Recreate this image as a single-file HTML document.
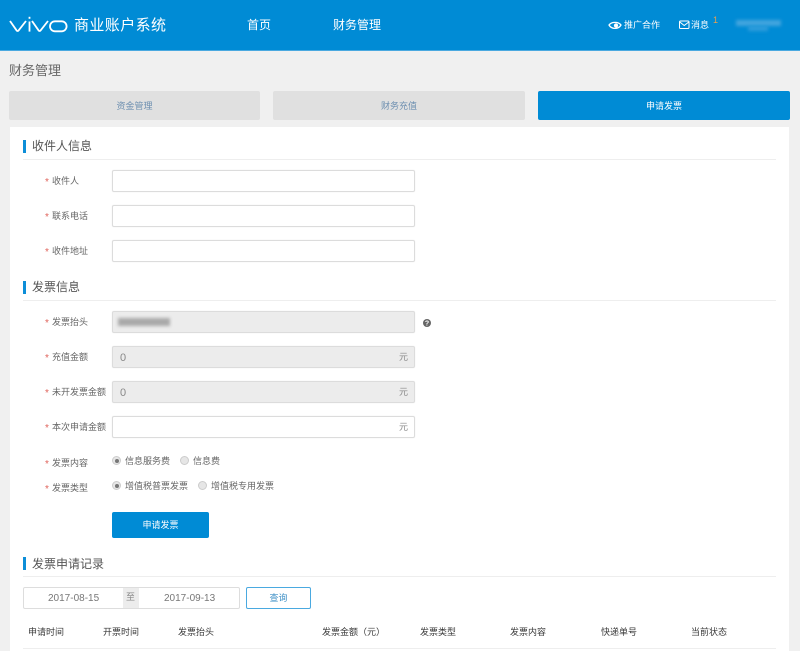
<!DOCTYPE html>
<html lang="zh"><head><meta charset="utf-8"><title>财务管理</title>
<style>
html,body{margin:0;padding:0;width:800px;height:651px;overflow:hidden;background:#f0f0f0}
body{position:relative;font-family:"Liberation Sans","Noto Sans CJK SC",sans-serif;color:#666}
.a,.t,.i,.tab,.sec,.line,.star,.r{position:absolute}
.t{white-space:nowrap;line-height:14px;font-size:9px;filter:blur(.35px)}
#hd{position:absolute;left:0;top:0;width:800px;height:50px;background:#008bd5;border-bottom:1px solid #4aa9e0}
.tab{top:91px;height:29px;width:251px;background:#e0e0e0;border-radius:2px;text-align:center;line-height:30px;font-size:9px;color:#6d8fb0}
.tab span{filter:blur(.35px);display:inline-block}
#card{position:absolute;left:10px;top:127px;width:779px;height:524px;background:#fff}
.bar{position:absolute;left:23px;width:3px;height:13px;background:#0d8ed8}
.sec{left:32px;font-size:12px;line-height:16px;color:#555;white-space:nowrap;filter:blur(.3px)}
.line{left:23px;width:753px;height:1px;background:#eee}
.i{left:112px;width:301px;height:20px;border:1px solid #dcdcdc;border-radius:2px;background:#fff;box-shadow:0 0 1px #e4e4e4}
.i.d{background:#ececec}
.star{left:45px;color:#e0645c;font-size:10px;line-height:15px;filter:blur(.3px)}
.r{width:7px;height:7px;border-radius:50%;background:#e6e6e6;border:1px solid #ccc}
.r.on::after{content:"";position:absolute;left:1.5px;top:1.5px;width:4px;height:4px;border-radius:50%;background:#777}
.u{position:absolute;left:399px;font-size:9px;line-height:14px;color:#888;filter:blur(.3px)}
.l{left:52px}
.th{top:625px;color:#3a3a3a;font-size:9px}
</style></head><body>
<div id="hd"></div>
<svg class="a" style="left:9px;top:15px;filter:blur(.2px)" width="60" height="18" viewBox="0 0 60 18" fill="none" stroke="#fff" stroke-width="1.8">
<path d="M1 6 L7.6 15.4 Q8.6 16.6 9.6 15.4 L17 6"/><path d="M20.5 6.5V16.6"/><path d="M20.5 1.8V3.8"/><path d="M23 6 L29.6 15.4 Q30.6 16.6 31.6 15.4 L39 6"/><rect x="41" y="6.3" width="16.6" height="10" rx="5"/>
</svg>
<div class="t" style="left:74px;top:17px;font-size:15px;letter-spacing:.4px;line-height:18px;color:#fff">商业账户系统</div>
<div class="t" style="left:247px;top:18px;font-size:12px;color:#fff">首页</div>
<div class="t" style="left:333px;top:18px;font-size:12px;color:#fff">财务管理</div>
<svg class="a" style="left:608px;top:20px" width="14" height="11" viewBox="0 0 14 11" fill="none" stroke="#fff" stroke-width="1.3">
<path d="M1 5 C3.5 1.5 10.5 1.5 13 5 C10.5 9.5 3.5 9.5 1 5Z"/><circle cx="8" cy="5.5" r="1.5" fill="#fff"/>
</svg>
<div class="t" style="left:624px;top:18px;color:#fff">推广合作</div>
<svg class="a" style="left:679px;top:20px" width="11" height="10" viewBox="0 0 11 10" fill="none" stroke="#fff" stroke-width="1">
<rect x=".5" y="1" width="9.5" height="7.5" rx="1"/><path d="M.8 2 L5.2 5.5 L9.8 2"/>
</svg>
<div class="t" style="left:691px;top:18px;color:#fff">消息</div>
<div class="t" style="left:713px;top:13px;color:#e8a050;font-size:9px">1</div>
<div class="a" style="left:736px;top:20px;width:45px;height:6px;background:#42a5de;filter:blur(1.5px)"></div>
<div class="a" style="left:748px;top:26px;width:20px;height:5px;background:#2e9cdb;filter:blur(1.5px)"></div>

<div class="t" style="left:9px;top:64px;font-size:13px;color:#666">财务管理</div>
<div class="tab" style="left:9px"><span>资金管理</span></div>
<div class="tab" style="left:273px;width:252px"><span>财务充值</span></div>
<div class="tab" style="left:538px;width:252px;background:#008bd5;color:#fff"><span>申请发票</span></div>
<div id="card"></div>

<div class="bar" style="top:140px"></div><div class="sec" style="top:138px">收件人信息</div><div class="line" style="top:159px"></div>
<div class="star" style="top:175px">*</div><div class="t l" style="top:174px">收件人</div><div class="i" style="top:170px"></div>
<div class="star" style="top:210px">*</div><div class="t l" style="top:209px">联系电话</div><div class="i" style="top:205px"></div>
<div class="star" style="top:245px">*</div><div class="t l" style="top:244px">收件地址</div><div class="i" style="top:240px"></div>

<div class="bar" style="top:281px"></div><div class="sec" style="top:279px">发票信息</div><div class="line" style="top:300px"></div>
<div class="star" style="top:316px">*</div><div class="t l" style="top:315px">发票抬头</div><div class="i d" style="top:311px"></div>
<div class="a" style="left:118px;top:318px;width:52px;height:8px;background:#aaa;filter:blur(1.5px)"></div>
<svg class="a" style="left:423px;top:319px" width="8" height="8" viewBox="0 0 8 8"><circle cx="4" cy="4" r="4" fill="#666"/><text x="4" y="6.6" font-size="7" font-weight="bold" text-anchor="middle" fill="#fff" font-family="Liberation Sans">?</text></svg>

<div class="star" style="top:351px">*</div><div class="t l" style="top:350px">充值金额</div><div class="i d" style="top:346px"></div>
<div class="t" style="left:120px;top:351px;font-size:11px;color:#888">0</div><div class="u" style="top:350px">元</div>
<div class="star" style="top:386px">*</div><div class="t l" style="top:385px">未开发票金额</div><div class="i d" style="top:381px"></div>
<div class="t" style="left:120px;top:386px;font-size:11px;color:#888">0</div><div class="u" style="top:385px">元</div>
<div class="star" style="top:421px">*</div><div class="t l" style="top:420px">本次申请金额</div><div class="i" style="top:416px"></div>
<div class="u" style="top:420px">元</div>

<div class="star" style="top:457px">*</div><div class="t l" style="top:456px">发票内容</div>
<div class="r on" style="left:112px;top:456px"></div><div class="t" style="left:125px;top:454px">信息服务费</div>
<div class="r" style="left:180px;top:456px"></div><div class="t" style="left:193px;top:454px">信息费</div>
<div class="star" style="top:482px">*</div><div class="t l" style="top:481px">发票类型</div>
<div class="r on" style="left:112px;top:481px"></div><div class="t" style="left:125px;top:479px">增值税普票发票</div>
<div class="r" style="left:198px;top:481px"></div><div class="t" style="left:211px;top:479px">增值税专用发票</div>

<div class="a" style="left:112px;top:512px;width:97px;height:26px;background:#008bd5;border-radius:2px;color:#fff;font-size:9px;line-height:26px;text-align:center"><span style="filter:blur(.35px);display:inline-block">申请发票</span></div>

<div class="bar" style="top:557px"></div><div class="sec" style="top:556px">发票申请记录</div><div class="line" style="top:576px"></div>
<div class="a" style="left:23px;top:587px;width:215px;height:20px;border:1px solid #ddd;border-radius:2px;background:#fff"></div>
<div class="a" style="left:123px;top:588px;width:16px;height:20px;background:#ececec"></div>
<div class="t" style="left:48px;top:592px;font-size:10px;color:#777">2017-08-15</div>
<div class="t" style="left:126px;top:590px;color:#888">至</div>
<div class="t" style="left:164px;top:592px;font-size:10px;color:#777">2017-09-13</div>
<div class="a" style="left:246px;top:587px;width:63px;height:20px;border:1px solid #4aa9e0;border-radius:2px;background:#fff;color:#3d8fc6;font-size:9px;line-height:20px;text-align:center"><span style="filter:blur(.35px);display:inline-block">查询</span></div>

<div class="t th" style="left:28px">申请时间</div>
<div class="t th" style="left:103px">开票时间</div>
<div class="t th" style="left:178px">发票抬头</div>
<div class="t th" style="left:322px">发票金额（元）</div>
<div class="t th" style="left:420px">发票类型</div>
<div class="t th" style="left:510px">发票内容</div>
<div class="t th" style="left:601px">快递单号</div>
<div class="t th" style="left:691px">当前状态</div>
<div class="line" style="top:648px"></div>
</body></html>
